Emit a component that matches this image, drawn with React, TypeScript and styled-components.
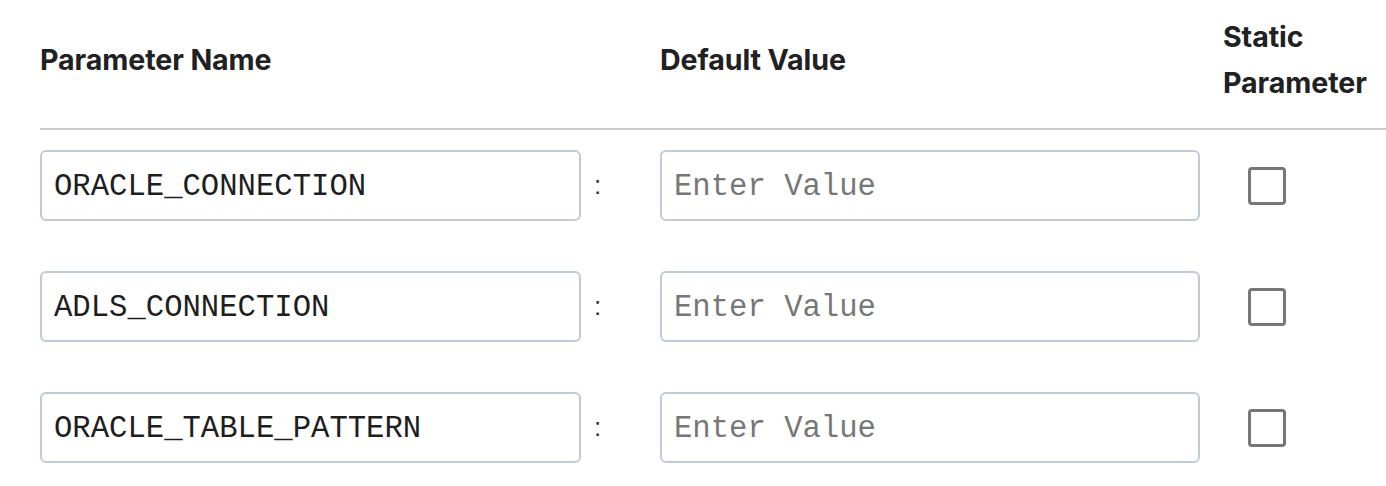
import React from "react";
import styled, { createGlobalStyle } from "styled-components";

const Global = createGlobalStyle`
  html, body { margin: 0; padding: 0; background: #fff; }
  body { font-family: Inter, "Noto Sans", sans-serif; color: #222; }
`;

const Page = styled.div`
  padding-left: 40px;
`;

const Grid = styled.div`
  display: grid;
  grid-template-columns: 541px 79px 540px 1fr;
`;

const HeaderCell = styled.div<{ $pad?: number }>`
  display: flex;
  align-items: center;
  padding: 14px 0 22px ${(p) => p.$pad ?? 0}px;
  font-family: Inter, sans-serif;
  font-weight: 700;
  font-size: 28.6px;
  letter-spacing: -0.1px;
  line-height: 46px;
  color: #212121;
  border-bottom: 2px solid #cbcbcb;
  margin-bottom: 20px;
`;

const Input = styled.input`
  box-sizing: border-box;
  width: 100%;
  height: 71px;
  padding: 3px 12px 0;
  border: 2px solid #bfccd8;
  border-radius: 6px;
  font-family: "Liberation Mono", "Courier New", monospace;
  font-size: 30.6px;
  color: #1e1e1e;
  background: #fff;
  outline: none;
  &::placeholder { color: #777; }
`;

const Cell = styled.div<{ $last?: boolean }>`
  display: flex;
  align-items: center;
  margin-bottom: ${(p) => (p.$last ? 0 : 50)}px;
`;

const Colon = styled.span`
  padding-left: 13px;
  font-family: "Liberation Sans", Arial, sans-serif;
  font-size: 26px;
  color: #333;
`;

const Check = styled.input.attrs({ type: "checkbox" })`
  appearance: none;
  margin: 0 0 0 48px;
  width: 38px;
  height: 38px;
  box-sizing: border-box;
  border: 3px solid #777;
  border-radius: 4px;
  background: #fff;
`;

const rows = ["ORACLE_CONNECTION", "ADLS_CONNECTION", "ORACLE_TABLE_PATTERN"];

export default function App() {
  return (
    <Page>
      <Global />
      <Grid>
        <HeaderCell>Parameter Name</HeaderCell>
        <HeaderCell />
        <HeaderCell>Default Value</HeaderCell>
        <HeaderCell $pad={23}>
          Static
          <br />
          Parameter
        </HeaderCell>
        {rows.map((r, i) => {
          const last = i === rows.length - 1;
          return (
            <React.Fragment key={r}>
              <Cell $last={last}>
                <Input defaultValue={r} readOnly />
              </Cell>
              <Cell $last={last}>
                <Colon>:</Colon>
              </Cell>
              <Cell $last={last}>
                <Input placeholder="Enter Value" />
              </Cell>
              <Cell $last={last}>
                <Check />
              </Cell>
            </React.Fragment>
          );
        })}
      </Grid>
    </Page>
  );
}
